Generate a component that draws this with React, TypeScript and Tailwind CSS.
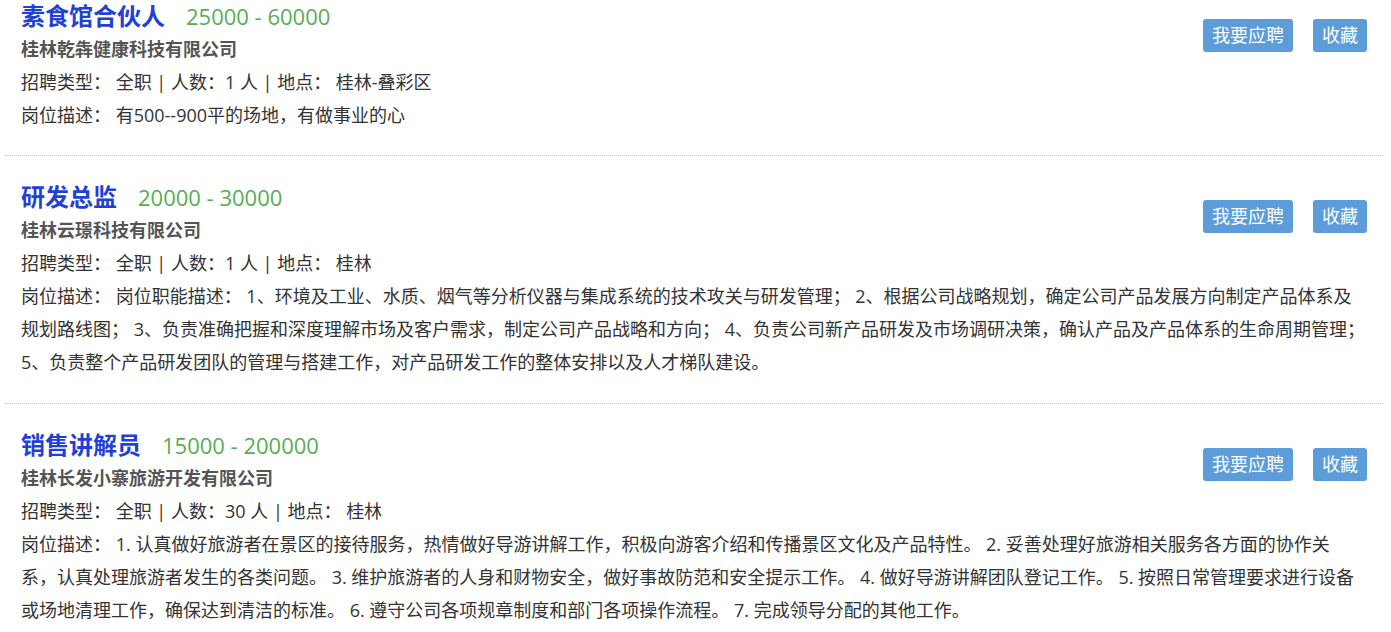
const FONT = '"Open Sans", "Noto Sans CJK SC", sans-serif';

type Job = {
  title: string;
  salary: string;
  company: string;
  type: string;
  count: string;
  place: string;
  desc: string;
  descClass: string;
};

const JOBS: Job[] = [
  {
    title: '素食馆合伙人',
    salary: '25000 - 60000',
    company: '桂林乾犇健康科技有限公司',
    type: '全职',
    count: '1',
    place: '桂林-叠彩区',
    desc: '有500--900平的场地，有做事业的心',
    descClass: 'mr-0',
  },
  {
    title: '研发总监',
    salary: '20000 - 30000',
    company: '桂林云璟科技有限公司',
    type: '全职',
    count: '1',
    place: '桂林',
    desc: '岗位职能描述： 1、环境及工业、水质、烟气等分析仪器与集成系统的技术攻关与研发管理； 2、根据公司战略规划，确定公司产品发展方向制定产品体系及规划路线图； 3、负责准确把握和深度理解市场及客户需求，制定公司产品战略和方向； 4、负责公司新产品研发及市场调研决策，确认产品及产品体系的生命周期管理； 5、负责整个产品研发团队的管理与搭建工作，对产品研发工作的整体安排以及人才梯队建设。',
    descClass: 'mr-0',
  },
  {
    title: '销售讲解员',
    salary: '15000 - 200000',
    company: '桂林长发小寨旅游开发有限公司',
    type: '全职',
    count: '30',
    place: '桂林',
    desc: '1. 认真做好旅游者在景区的接待服务，热情做好导游讲解工作，积极向游客介绍和传播景区文化及产品特性。 2. 妥善处理好旅游相关服务各方面的协作关系，认真处理旅游者发生的各类问题。 3. 维护旅游者的人身和财物安全，做好事故防范和安全提示工作。 4. 做好导游讲解团队登记工作。 5. 按照日常管理要求进行设备或场地清理工作，确保达到清洁的标准。 6. 遵守公司各项规章制度和部门各项操作流程。 7. 完成领导分配的其他工作。',
    descClass: 'mr-[6px]',
  },
];

function JobItem({ job, first }: { job: Job; first: boolean }) {
  return (
    <div
      className={
        first
          ? '-mt-[1.5px] pl-4 pr-4 pb-[23px] border-b border-dotted border-[#c4c4c4]'
          : 'pl-4 pr-4 pt-6 pb-6 border-b border-dotted border-[#c4c4c4]'
      }
    >
      {/* apply / favourite buttons float right */}
      <div className="float-right mt-5 flex gap-5">
        <button className="h-[33px] rounded-[3px] bg-[#5b9cd9] px-[9px] text-[18px] leading-[33px] text-white">
          我要应聘
        </button>
        <button className="h-[33px] rounded-[3px] bg-[#5b9cd9] px-[9px] text-[18px] leading-[33px] text-white">
          收藏
        </button>
      </div>

      <div className="flex items-baseline leading-[33px]">
        <span className="text-[24px] font-bold text-[#1f41d8]">{job.title}</span>
        <span className="ml-[21px] text-[22px] text-[#58ad52]">{job.salary}</span>
      </div>
      <div className="text-[18px] font-bold leading-[33px] text-[#555]">{job.company}</div>
      <div className="text-[18px] leading-[33px] text-[#333]">
        招聘类型： {job.type} | 人数：{job.count} 人 | 地点： {job.place}
      </div>
      <div className={`clear-right text-[18px] leading-[33px] text-[#333] ${job.descClass}`}>
        岗位描述： {job.desc}
      </div>
    </div>
  );
}

export default function App() {
  return (
    <div className="h-[632px] overflow-hidden bg-white pl-[5px] pr-[8px]" style={{ fontFamily: FONT }}>
      {JOBS.map((job, i) => (
        <JobItem key={job.title} job={job} first={i === 0} />
      ))}
    </div>
  );
}
